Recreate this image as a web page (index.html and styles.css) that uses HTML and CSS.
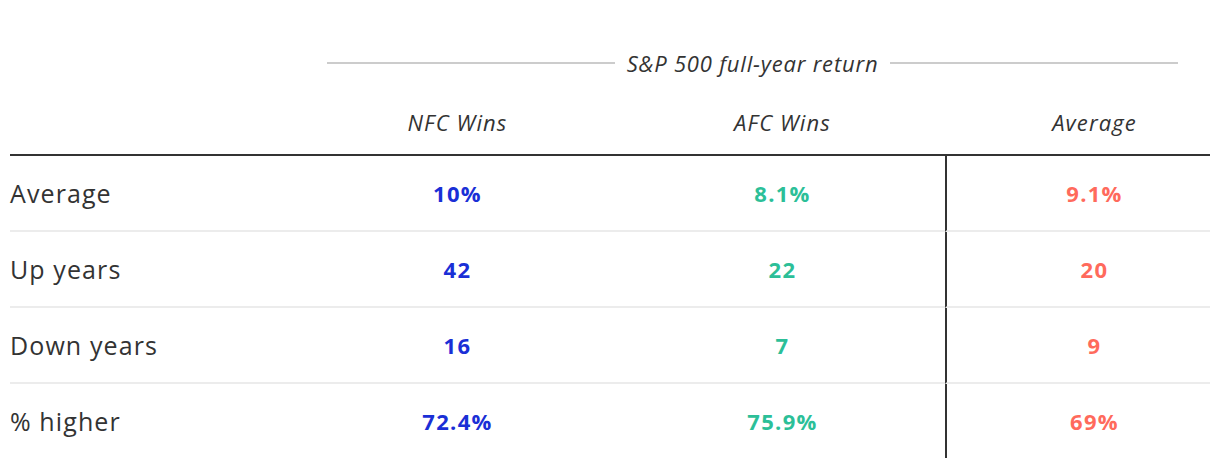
FILE: index.html
```html
<!DOCTYPE html>
<html>
<head>
<meta charset="utf-8">
<link rel="stylesheet" href="styles.css">
</head>
<body>
<table class="tbl">
  <colgroup>
    <col class="c-stub">
    <col class="c-mid">
    <col class="c-mid">
    <col class="c-avg">
  </colgroup>
  <thead>
    <tr class="spanner-row">
      <th></th>
      <th colspan="3" class="spanner">
        <div class="spanner-inner"><span class="rule"></span><span class="spanner-text">S&amp;P 500 full-year return</span><span class="rule"></span></div>
      </th>
    </tr>
    <tr class="head-row">
      <th class="stub"></th>
      <th>NFC Wins</th>
      <th>AFC Wins</th>
      <th class="avg">Average</th>
    </tr>
  </thead>
  <tbody>
    <tr>
      <td class="stub">Average</td>
      <td class="nfc">10%</td>
      <td class="afc">8.1%</td>
      <td class="avg all">9.1%</td>
    </tr>
    <tr>
      <td class="stub">Up years</td>
      <td class="nfc">42</td>
      <td class="afc">22</td>
      <td class="avg all">20</td>
    </tr>
    <tr>
      <td class="stub">Down years</td>
      <td class="nfc">16</td>
      <td class="afc">7</td>
      <td class="avg all">9</td>
    </tr>
    <tr class="last">
      <td class="stub">% higher</td>
      <td class="nfc">72.4%</td>
      <td class="afc">75.9%</td>
      <td class="avg all">69%</td>
    </tr>
  </tbody>
</table>
</body>
</html>
```

FILE: styles.css
```css
html, body {
  margin: 0;
  padding: 0;
  background: #ffffff;
}
body {
  font-family: "Open Sans", "Liberation Sans", sans-serif;
  color: #333333;
}
.tbl {
  margin-left: 10px;
  width: 1200px;
  table-layout: fixed;
  border-collapse: separate;
  border-spacing: 0;
}
.c-stub { width: 285px; }
.c-mid { width: 325px; }
.c-avg { width: 265px; }

.spanner-row th {
  padding: 50px 0 0 0;
  height: 26px;
  line-height: 26px;
  font-weight: normal;
}
.spanner {
  padding-left: 32px !important;
  padding-right: 32px !important;
}
.spanner-inner {
  display: flex;
  align-items: center;
  gap: 12px;
}
.rule {
  flex: 1;
  height: 2px;
  background: #cccccc;
}
.spanner-text {
  font-style: italic;
  font-size: 22px;
  letter-spacing: 0.8px;
  color: #333333;
}
.head-row th {
  padding: 33px 0 19px 0;
  line-height: 26px;
  font-style: italic;
  font-weight: normal;
  font-size: 22px;
  letter-spacing: 1.1px;
  text-align: center;
  border-bottom: 2px solid #333333;
}
.head-row th.avg {
  padding-left: 34px;
}
tbody td {
  height: 74px;
  padding: 0;
  vertical-align: middle;
  text-align: center;
  font-weight: bold;
  font-size: 22px;
  letter-spacing: 1.3px;
  border-bottom: 2px solid #ececec;
}
tbody tr.last td {
  border-bottom: none;
}
tbody td.stub {
  text-align: left;
  font-weight: normal;
  font-size: 25px;
  letter-spacing: 1.1px;
  color: #333333;
}
td.avg {
  border-left: 2px solid #333333;
  padding-left: 32px;
}
.nfc { color: #1a2fd6; }
.afc { color: #2cbf98; }
.all { color: #ff6a5c; }
```
